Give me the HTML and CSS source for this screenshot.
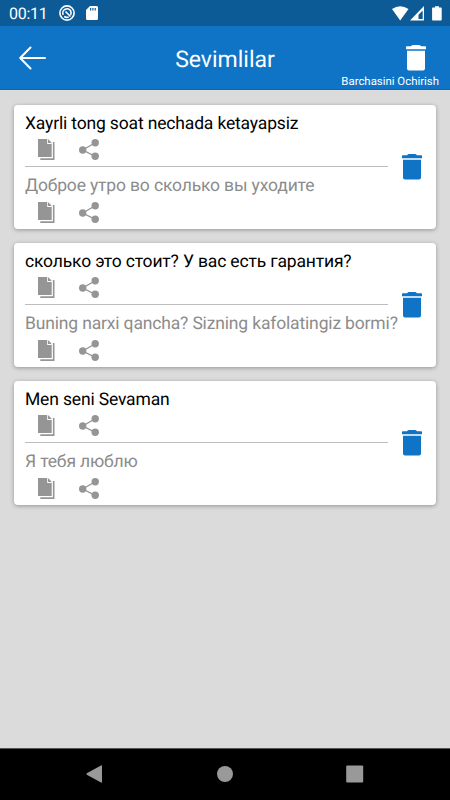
FILE: index.html
```
<!DOCTYPE html>
<html lang="uz">
<head>
<meta charset="utf-8">
<title>Sevimlilar</title>
<link rel="stylesheet" href="styles.css">
</head>
<body>
<svg width="0" height="0" class="defs">
  <symbol id="trash" viewBox="0 0 20 26"><path d="M0 1.900Q0 1.200 .7 1.200H5Q6 0 7 0h6q1 0 2 1.200h4.300Q20 1.200 20 1.900V4.200H0zM1 5.700h18V23.500q0 2-2 2H3q-2 0-2-2z"/></symbol>
  <symbol id="copy" viewBox="0 0 17 21"><path d="M0 0H10L13.700 4V18H0zM14.900 3H16.500V21H2.300V19.300H14.900z"/><path class="fold" d="M10 0V4H13.700V5H9.200V0z"/><path d="M11 1.200L12.800 3.100H11z"/></symbol>
  <symbol id="share" viewBox="0 0 20 21"><path class="link" d="M16.200 3.700L3.700 11L16.200 17.300"/><circle cx="16.200" cy="3.700" r="3.700"/><circle cx="3.700" cy="11" r="3.700"/><circle cx="16.200" cy="17.300" r="3.700"/></symbol>
</svg>
<div class="screen">
  <div class="status">
    <span class="clock">00:11</span>
    <svg class="sync" viewBox="0 0 16 16"><circle cx="8" cy="8" r="7.100"/><path d="M4.200 9.800A4.200 4.200 0 0 1 11.800 6.200Q12.500 8 11.600 9.900M5.200 11.500Q7.500 13 9.700 12M6.500 6.500L11.500 11.500"/></svg>
    <svg class="sd" viewBox="0 0 12 14"><path fill-rule="evenodd" d="M4 0H10.500Q12 0 12 1.500V12.500Q12 14 10.500 14H1.500Q0 14 0 12.500V4zM4 2V4.500H5.200V2zM6.300 2V4.500H7.500V2zM8.600 2V4.500H9.800V2z"/></svg>
    <svg class="signals" viewBox="0 0 50 15"><path d="M0 3Q8.200-2.600 16.500 3L8.200 14.500z"/><path fill-rule="evenodd" d="M32 0V14.500H18zM30.700 4.500L26.500 8.800V13H30.700z"/><path d="M41 1.500h2V.300h4v1.200h2q.700 0 .700.700V13.800q0 .700-.700.700H40.800q-.700 0-.700-.700V2.200q0-.700.700-.700z"/></svg>
  </div>
  <header class="header">
    <svg class="back" viewBox="0 0 27 24"><path d="M11.500 1.500L1.200 12L11.500 22.500M1.200 12H26"/></svg>
    <h1 class="title">Sevimlilar</h1>
    <div class="clear"><svg class="trash"><use href="#trash"/></svg><span>Barchasini Ochirish</span></div>
  </header>
  <main class="list">
    <article class="card">
      <div class="body">
        <p class="phrase">Xayrli tong soat nechada ketayapsiz</p>
        <div class="actions"><svg class="copy"><use href="#copy"/></svg><svg class="share"><use href="#share"/></svg></div>
        <div class="rule"></div>
        <p class="phrase muted">Доброе утро во сколько вы уходите</p>
        <div class="actions"><svg class="copy"><use href="#copy"/></svg><svg class="share"><use href="#share"/></svg></div>
      </div>
      <svg class="trash"><use href="#trash"/></svg>
    </article>
    <article class="card">
      <div class="body">
        <p class="phrase">сколько это стоит? У вас есть гарантия?</p>
        <div class="actions"><svg class="copy"><use href="#copy"/></svg><svg class="share"><use href="#share"/></svg></div>
        <div class="rule"></div>
        <p class="phrase muted">Buning narxi qancha? Sizning kafolatingiz bormi?</p>
        <div class="actions"><svg class="copy"><use href="#copy"/></svg><svg class="share"><use href="#share"/></svg></div>
      </div>
      <svg class="trash"><use href="#trash"/></svg>
    </article>
    <article class="card">
      <div class="body">
        <p class="phrase">Men seni Sevaman</p>
        <div class="actions"><svg class="copy"><use href="#copy"/></svg><svg class="share"><use href="#share"/></svg></div>
        <div class="rule"></div>
        <p class="phrase muted">Я тебя люблю</p>
        <div class="actions"><svg class="copy"><use href="#copy"/></svg><svg class="share"><use href="#share"/></svg></div>
      </div>
      <svg class="trash"><use href="#trash"/></svg>
    </article>
  </main>
  <nav class="nav">
    <svg viewBox="0 0 18 18"><path d="M15 .500Q16 0 16 1V17Q16 18 15 17.500L.800 9.700Q0 9 .800 8.300z"/></svg>
    <svg viewBox="0 0 18 18"><circle cx="9" cy="9" r="8"/></svg>
    <svg viewBox="0 0 18 18"><rect x=".200" y=".500" width="17" height="17" rx="1"/></svg>
  </nav>
</div>
</body>
</html>
```

FILE: styles.css
```
* { box-sizing: border-box; }
body { margin: 0; font-family: Roboto, sans-serif; text-rendering: geometricPrecision; }
svg { display: block; flex: none; }
.defs { position: absolute; }
.screen { width: 450px; height: 800px; display: flex; flex-direction: column; background: #dbdbdb; overflow: hidden; }
.status { height: 26px; flex: none; background: #0c5b97; color: #fff; display: flex; align-items: center; padding: 0 8px 0 9px; }
.status svg { fill: #fff; }
.clock { font-size: 16px; line-height: 26px; width: 50px; padding-top: 2px; letter-spacing: -.3px; }
.status .sync { width: 16px; height: 16px; fill: none; stroke: #fff; stroke-width: 1.6; }
.sd { width: 12px; height: 14px; margin-left: 11px; }
.signals { width: 50px; height: 15px; margin-left: auto; }
.header { height: 64px; flex: none; background: #0f74c6; color: #fff; display: grid; grid-template-columns: 120px 1fr 120px; align-items: center; border-bottom: 1px solid #0c67b4; }
.back { width: 27px; height: 24px; margin-left: 19px; fill: none; stroke: #fff; stroke-width: 2; stroke-linecap: round; stroke-linejoin: round; }
.title { margin: 5px 0 0; font-size: 23px; line-height: 28px; font-weight: 400; text-align: center; }
.clear { align-self: start; padding: 19px 11px 0 0; display: flex; flex-direction: column; align-items: flex-end; font-size: 11.4px; line-height: 14px; white-space: nowrap; }
.clear span { margin-top: 3px; }
.trash { width: 20px; height: 26px; fill: #0f74c6; }
.clear .trash { fill: #fff; margin-right: 13px; }
.list { flex: 1; padding: 15px 14px; display: flex; flex-direction: column; gap: 14px; }
.card { height: 124px; background: #fff; border-radius: 4px; box-shadow: 0 1px 4px rgba(0,0,0,.32); display: flex; align-items: center; padding: 0 14px 0 11px; }
.body { width: 363px; margin-right: auto; align-self: flex-start; padding-top: 8px; }
.phrase { margin: 0; font-size: 17.5px; letter-spacing: -.16px; line-height: 22px; height: 26px; color: #000; white-space: nowrap; }
.muted { color: #8c8c8c; height: 27px; }
.actions { height: 21px; display: flex; gap: 24px; padding-left: 13px; fill: #959595; }
.copy { width: 17px; height: 21px; }
.share { width: 20px; height: 21px; }
.fold { fill: #fff; }
.link { fill: none; stroke: #959595; stroke-width: 1.3; }
.rule { height: 1px; background: #bdbdbd; margin: 6px 0 8px; }
.nav { height: 52px; flex: none; background: #000; border-top: 1px solid #555; display: grid; grid-template-columns: repeat(3, 18px); justify-content: center; column-gap: 112px; align-items: center; fill: #999; }
.nav svg { width: 18px; height: 18px; margin-top: -2px; }
```
